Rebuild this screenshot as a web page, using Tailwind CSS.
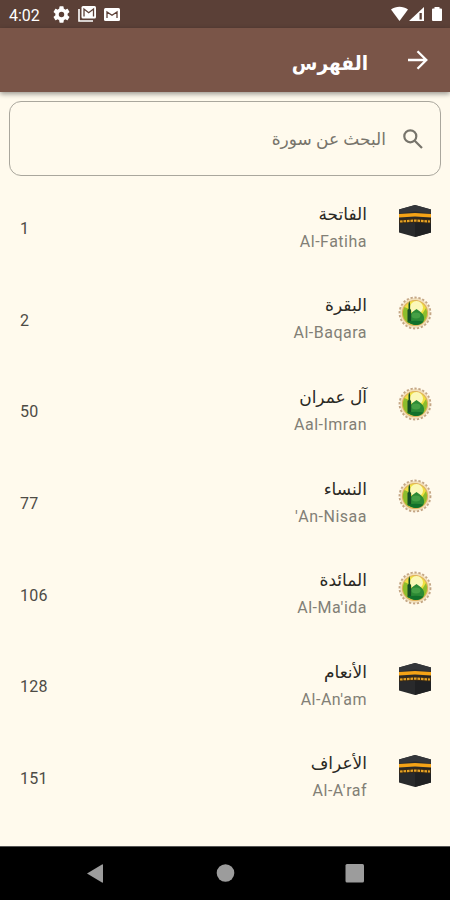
<!DOCTYPE html>
<html lang="ar" dir="rtl">
<head>
    <meta charset="UTF-8">
    <meta name="viewport" content="width=device-width, initial-scale=1.0">
    <title>الفهرس</title>
    <script src="https://cdn.jsdelivr.net/npm/@tailwindcss/browser@4"></script>
</head>
<body class="bg-[#fffaed] font-['Roboto','DejaVu_Sans',sans-serif]">
    <svg class="hidden">
        <symbol id="kaaba" viewBox="0 0 34 34">
            <path d="M1 5.500 17 1l16 4.500v23L17 33 1 28.500z" fill="#292a2c"/>
            <path d="M1 5.500 17 1l16 4.500v4L17 7.500 1 9.500z" fill="#34363a"/>
            <path d="M17 15v18l16-4.500V13z" fill="#202123"/>
            <path d="M1 10 17 9l16 1v3.600L17 12.400 1 13.600z" fill="#f5a316"/>
            <path d="M1 15 17 14l16 1v4.500l-16-.8-16 .8z" fill="#382a17"/>
            <path d="M2 17.500 17 16.500l15 1" stroke="#e6a223" stroke-width="2.200" stroke-dasharray="2.600 .9" fill="none"/>
        </symbol>
        <symbol id="mosque" viewBox="0 0 34 34">
            <circle cx="17" cy="17" r="15" fill="#f2dfba"/>
            <circle cx="17" cy="17" r="15.500" fill="none" stroke="#c4a685" stroke-width="1.800" stroke-dasharray="2.300 1.700"/>
            <circle cx="17" cy="17" r="12.500" fill="#f0e040" stroke="#dfb05a" stroke-width="1.200"/>
            <circle cx="18.500" cy="11.500" r="6.500" fill="#fbf8b8"/>
            <path d="M6.500 11a12 12 0 0 0 4.500 16.500l2-2V14zM28 12a12 12 0 0 1-4 15l-1-7z" fill="#8fbd2c"/>
            <path d="M11.500 24c-1-6.500 3.500-8 7-11 3.500 3 8.500 4.500 7.500 11-1 3.500-4 5-7.500 5s-6-1.500-7-5z" fill="#2c8a35"/>
            <ellipse cx="18" cy="19.500" rx="4.500" ry="3" fill="#45a045"/>
            <path d="M9.500 26V14l1-1V8l.8-3 .8 3v5l1 1v13.500z" fill="#174f24"/>
            <path d="M9.500 25.500c5-1 11-1 16 0-4 4.500-12 4.500-16 0z" fill="#12702a"/>
        </symbol>
    </svg>

    <div class="relative w-[450px] h-[900px] overflow-hidden flex flex-col">
        <div dir="ltr" class="h-7 shrink-0 bg-[#5b4037] flex items-center text-white">
            <span class="ml-[9px] mt-[3px] w-8 text-base leading-5">4:02</span>
            <svg class="ml-3 mt-px size-[17px]" viewBox="2 2 20 20" fill="#fff"><path d="M19.140 12.940c.04-.3.060-.610.060-.940s-.02-.640-.070-.940l2.030-1.580a.49.49 0 0 0 .12-.610l-1.920-3.320a.49.49 0 0 0-.590-.220l-2.390.960a7 7 0 0 0-1.620-.940l-.360-2.540a.48.48 0 0 0-.480-.410h-3.840a.48.48 0 0 0-.470.410l-.360 2.540a7.300 7.300 0 0 0-1.620.940l-2.390-.960a.48.48 0 0 0-.590.220L2.740 8.870a.47.47 0 0 0 .12.610l2.030 1.580c-.05.3-.090.630-.090.940s.02.640.070.940l-2.030 1.580a.49.49 0 0 0-.12.610l1.920 3.320c.12.220.370.290.590.220l2.390-.960c.5.380 1.030.7 1.620.940l.360 2.540c.05.240.240.410.480.410h3.840c.240 0 .440-.170.470-.410l.360-2.540a7.300 7.300 0 0 0 1.620-.940l2.390.960c.220.080.470 0 .590-.220l1.920-3.320a.48.48 0 0 0-.12-.610zM12 15.200a3.200 3.200 0 1 1 0-6.400 3.200 3.200 0 0 1 0 6.400z"/></svg>
            <svg class="ml-2 w-[18px] h-4" viewBox="0 0 18 16" fill="none"><path d="M1 3v12h14" stroke="#fff" stroke-width="1.600"/><rect x="3.500" width="14.500" height="12.500" rx="1.500" fill="#fff"/><path d="M6 10.500V3l4.700 3.700L15.500 3v7.500" stroke="#5b4037" stroke-width="1.300"/></svg>
            <svg class="ml-2 w-4 h-[13px]" viewBox="0 0 16 13" fill="none"><rect width="16" height="13" rx="1.500" fill="#fff"/><path d="M3 10V4l5 3.300L13 4v6" stroke="#5b4037" stroke-width="1.300"/></svg>
            <svg class="ml-auto mr-[7px] w-[53px] h-4" viewBox="0 0 53 16" fill="#fff"><path d="M1 3.500C6-.3 13-.3 18 3.500L9.500 15z"/><path d="M19 15 34 1v14z"/><path d="M29.500 7h2.300v6.500h-2.300z" fill="#5b4037"/><path d="M42 3.500a1 1 0 0 1 1-1h1.500V1h5v1.500H51a1 1 0 0 1 1 1V14a1 1 0 0 1-1 1h-8a1 1 0 0 1-1-1z"/></svg>
        </div>

        <header class="relative h-16 shrink-0 bg-[#7a5548] shadow-[0_2px_5px_rgba(0,0,0,0.4)] flex items-center text-white">
            <svg class="mr-[22px] size-5" viewBox="0 0 20 20" fill="none" stroke="#fff" stroke-width="2.300"><path d="M0 10h18M9.500 1.200 18.300 10l-8.800 8.800"/></svg>
            <h1 class="mr-10 mt-1.5 text-[20px] font-bold whitespace-nowrap origin-right scale-x-[0.93]">الفهرس</h1>
        </header>

        <div class="mx-[9px] mt-[9px] h-[75px] shrink-0 rounded-[12px] border border-[#aaa79d] flex items-center text-[#77746b]">
            <svg class="mr-[17px] size-5" viewBox="0 0 20 20" fill="none" stroke="currentColor" stroke-width="2.200"><circle cx="7.300" cy="7.300" r="6"/><path d="m11.700 11.700 7.300 7.300"/></svg>
            <span class="mr-[17px] mt-0.5 text-[17px] whitespace-nowrap">البحث عن سورة</span>
        </div>

        <main id="surahList" class="grow min-h-0 overflow-hidden"></main>

        <nav dir="ltr" class="h-[54px] shrink-0 border-t border-[#555] bg-black">
            <svg class="w-full h-[53px]" viewBox="0 0 450 53" fill="#9c9c9c"><path d="M87 26.500 102 17.500q1-.5 1 .5v17q0 1-1 .5z"/><circle cx="225.500" cy="26" r="8.800"/><rect x="345.500" y="17" width="18.500" height="18.500" rx="1.500"/></svg>
        </nav>
    </div>

    <script>
        const surahs = [
            { name: 'الفاتحة', latin: 'Al-Fatiha', page: 1, icon: 'kaaba' },
            { name: 'البقرة', latin: 'Al-Baqara', page: 2, icon: 'mosque' },
            { name: 'آل عمران', latin: 'Aal-Imran', page: 50, icon: 'mosque' },
            { name: 'النساء', latin: "An-Nisaa'", page: 77, icon: 'mosque' },
            { name: 'المائدة', latin: "Al-Ma'ida", page: 106, icon: 'mosque' },
            { name: 'الأنعام', latin: "Al-An'am", page: 128, icon: 'kaaba' },
            { name: 'الأعراف', latin: "Al-A'raf", page: 151, icon: 'kaaba' }
        ];

        const surahList = document.getElementById('surahList');
        surahs.forEach(surah => {
            const row = document.createElement('div');
            row.className = 'h-[91.6px] flex items-center pr-[18px] pl-5';
            row.innerHTML = `
                <svg class="size-[34px] mb-px shrink-0"><use href="#${surah.icon}"/></svg>
                <div class="mr-[31px] mt-3 grow">
                    <p class="h-[27px] text-[17px] leading-[27px] text-[#292823]">${surah.name}</p>
                    <p class="h-[27px] text-base leading-[27px] tracking-[0.5px] text-[#827f76]">${surah.latin}</p>
                </div>
                <span dir="ltr" class="mt-[15px] text-base tracking-[0.3px] text-[#4d4b45]">${surah.page}</span>`;
            surahList.appendChild(row);
        });
    </script>
</body>
</html>
